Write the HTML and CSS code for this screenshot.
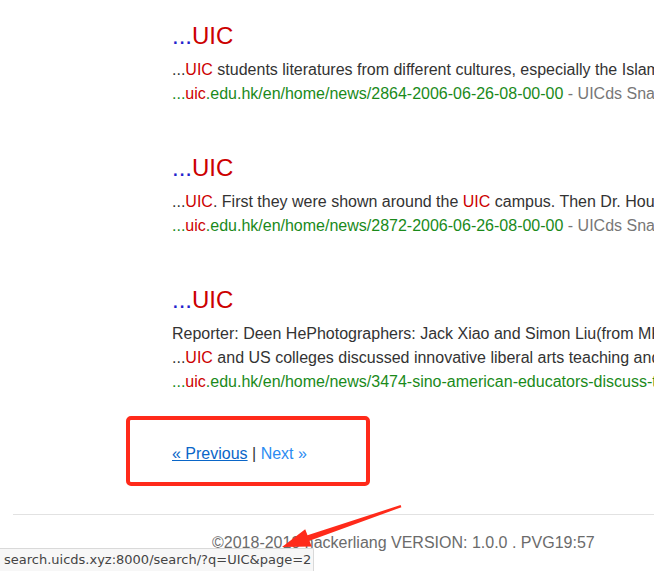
FILE: index.html
```html
<!DOCTYPE html>
<html>
<head>
<meta charset="utf-8">
<link rel="stylesheet" href="styles.css">
</head>
<body>
<div class="page">
  <div class="results">
    <div class="result">
      <div class="title"><span class="dots">...</span><span class="hl">UIC</span></div>
      <div class="line">...<span class="hl">UIC</span> students literatures from different cultures, especially the Islamic world and more</div>
      <div class="url"><span>...</span><span class="hl">uic</span>.edu.hk/en/home/news/2864-2006-06-26-08-00-00 <span class="snap">- UICds Snapshot</span></div>
    </div>
    <div class="result">
      <div class="title"><span class="dots">...</span><span class="hl">UIC</span></div>
      <div class="line">...<span class="hl">UIC</span>. First they were shown around the <span class="hl">UIC</span> campus. Then Dr. Hou and more</div>
      <div class="url"><span>...</span><span class="hl">uic</span>.edu.hk/en/home/news/2872-2006-06-26-08-00-00 <span class="snap">- UICds Snapshot</span></div>
    </div>
    <div class="result">
      <div class="title"><span class="dots">...</span><span class="hl">UIC</span></div>
      <div class="line">Reporter: Deen HePhotographers: Jack Xiao and Simon Liu(from MKT and more)</div>
      <div class="line">...<span class="hl">UIC</span> and US colleges discussed innovative liberal arts teaching and learning</div>
      <div class="url"><span>...</span><span class="hl">uic</span>.edu.hk/en/home/news/3474-sino-american-educators-discuss-the-future</div>
    </div>
    <div class="pager"><a class="prev" href="#">« Previous</a> | <a class="next" href="#">Next »</a></div>
  </div>
  <hr class="rule">
  <div class="footer">©2018-2019 hackerliang VERSION: 1.0.0 . PVG19:57</div>
</div>
<div class="annot-box"></div>
<svg class="annot-arrow" width="654" height="571" viewBox="0 0 654 571">
  <polygon points="400.6,505 307.5,535.3 305.2,529.2 282,547 311.6,546.6 309.5,540.7 401.4,507.2" fill="#ff2a1a"/>
</svg>
<div class="status">search.uicds.xyz:8000/search/?q=UIC&amp;page=2</div>
</body>
</html>
```
FILE: styles.css
```css
html, body {
  margin: 0;
  padding: 0;
  background: #fff;
  overflow: hidden;
}
body {
  width: 654px;
  height: 571px;
  position: relative;
  font-family: "Liberation Sans", Arial, sans-serif;
  color: #333;
}
.page {
  padding-left: 13px;
  width: 900px;
}
.results {
  padding-left: 159px;
  padding-top: 22px;
}
.result {
  margin-bottom: 48px;
}
.title {
  font-size: 24px;
  line-height: 28px;
  height: 28px;
  margin-bottom: 8px;
  white-space: nowrap;
}
.dots { color: #2222cc; }
.hl { color: #cc0000; }
.line, .url {
  font-size: 16px;
  line-height: 24px;
  white-space: nowrap;
}
.url { color: #1a8a1a; }
.snap { color: #777; }
.pager {
  font-size: 16px;
  line-height: 24px;
  color: #333;
}
.prev { color: #0a66c8; text-decoration: underline; }
.next { color: #2b8cf2; text-decoration: none; }
.rule {
  margin: 48px 0 0 0;
  border: 0;
  border-top: 1px solid #e2e2e2;
  height: 0;
}
.footer {
  padding-left: 199px;
  margin-top: 16px;
  font-size: 16px;
  line-height: 24px;
  color: #6b6b6b;
  white-space: nowrap;
}
.annot-box {
  position: absolute;
  left: 126px;
  top: 416px;
  width: 236px;
  height: 62px;
  border: 4px solid #ff2a1a;
  border-radius: 5px;
}
.annot-arrow {
  position: absolute;
  left: 0;
  top: 0;
}
.status {
  position: absolute;
  left: 0;
  top: 548px;
  width: 314px;
  height: 23px;
  box-sizing: border-box;
  background: #f7f7f7;
  border: 1px solid #d9d9d9;
  border-left: 0;
  border-bottom: 0;
  border-top-right-radius: 2px;
  font-family: "DejaVu Sans", sans-serif;
  font-size: 13px;
  line-height: 21px;
  padding-left: 4px;
  color: #444;
  white-space: nowrap;
}
```
